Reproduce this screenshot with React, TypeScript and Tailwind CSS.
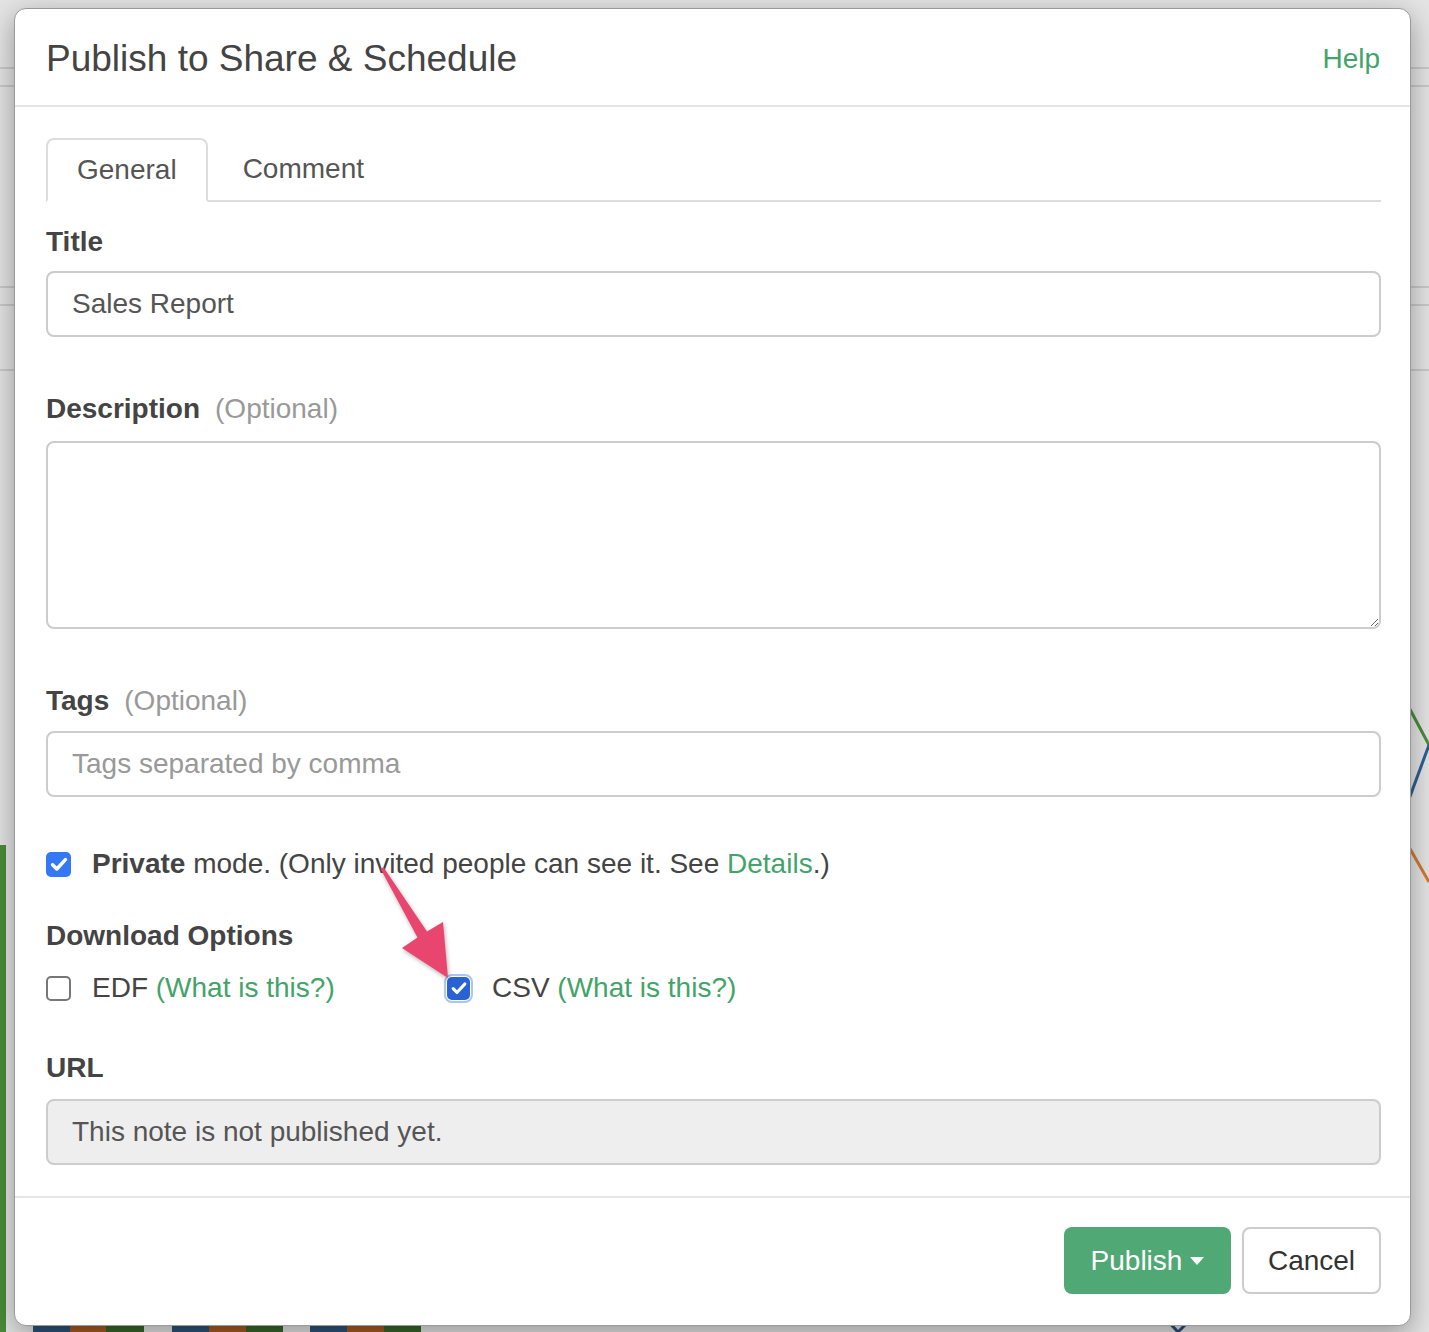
import React from "react";

const GREEN = "text-[#43a46a]";

const Check = ({ size = 22 }: { size?: number }) => (
  <svg viewBox="0 0 24 24" width={size} height={size} fill="none">
    <path
      d="M5 12.8l4.6 4.6L19 7.2"
      stroke="white"
      strokeWidth="3.8"
      strokeLinecap="round"
      strokeLinejoin="round"
    />
  </svg>
);

const Label = ({ text, optional }: { text: string; optional?: boolean }) => (
  <div className="flex h-[40px] items-center text-[28px] leading-[40px]">
    <span className="font-bold text-[#444]">{text}</span>
    {optional && <span className="ml-[15px] text-[#999]">(Optional)</span>}
  </div>
);

export default function App() {
  return (
    <div className="relative h-[1332px] w-[1429px] overflow-hidden bg-[#e4e4e4] pl-[14px] pt-[8px] font-['Liberation_Sans','Helvetica',Arial,sans-serif]">
      {/* page behind the dialog */}
      <div className="absolute left-0 top-[67px] h-[2px] w-full bg-[#c9c9c9]" />
      <div className="absolute left-0 top-[85px] h-[2px] w-full bg-[#c9c9c9]" />
      <div className="absolute left-0 top-[286px] h-[2px] w-full bg-[#c9c9c9]" />
      <div className="absolute left-0 top-[304px] h-[2px] w-full bg-[#c9c9c9]" />
      <div className="absolute left-0 top-[369px] h-[2px] w-full bg-[#c9c9c9]" />
      <div className="absolute left-0 top-[845px] h-[487px] w-[6px] bg-[#4a8c3a]" />
      <div className="absolute bottom-0 left-[33px] flex h-[8px]">
        <div className="w-[37px] bg-[#2e5279]" />
        <div className="w-[36px] bg-[#a45a22]" />
        <div className="w-[38px] bg-[#37652a]" />
        <div className="w-[28px]" />
        <div className="w-[37px] bg-[#2e5279]" />
        <div className="w-[37px] bg-[#a45a22]" />
        <div className="w-[37px] bg-[#37652a]" />
        <div className="w-[27px]" />
        <div className="w-[37px] bg-[#2e5279]" />
        <div className="w-[37px] bg-[#a45a22]" />
        <div className="w-[37px] bg-[#37652a]" />
      </div>
      <svg
        className="pointer-events-none absolute left-0 top-0"
        width="1429"
        height="1332"
        fill="none"
      >
        <path d="M1405 700 L1429 745" stroke="#4a8c3a" strokeWidth="3" />
        <path d="M1429 745 L1405 810" stroke="#2e5f93" strokeWidth="3" />
        <path d="M1405 840 L1429 882" stroke="#d27a2c" strokeWidth="3" />
        <path d="M1165 1318 L1178 1332 L1192 1318" stroke="#2e4f7a" strokeWidth="3" />
      </svg>

      {/* dialog */}
      <div className="relative z-10 flex w-[1397px] flex-col rounded-[12px] border border-[#9a9a9a] bg-white shadow-[0_8px_28px_rgba(0,0,0,0.35)]">
        <div className="flex h-[98px] items-center justify-between border-b-2 border-[#e5e5e5] pl-[31px] pr-[30px] pt-[3px]">
          <h2 className="text-[37px] text-[#444]">Publish to Share &amp; Schedule</h2>
          <a className={`text-[28px] ${GREEN}`}>Help</a>
        </div>

        <div className="flex flex-col pb-[31px] pl-[31px] pr-[29px] pt-[31px] text-[28px] text-[#444]">
          <div className="flex border-b-2 border-[#ddd]">
            <div className="-mb-[2px] flex h-[64px] items-center rounded-t-[8px] border-2 border-[#ddd] border-b-white bg-white px-[29px] text-[#555]">
              General
            </div>
            <div className="ml-[4px] flex h-[62px] items-center px-[31px] text-[#555]">
              Comment
            </div>
          </div>

          <div className="mt-[20px]">
            <Label text="Title" />
          </div>
          <div className="mt-[9px] flex h-[66px] items-center rounded-[8px] border-2 border-[#ccc] px-[24px] text-[#555]">
            Sales Report
          </div>

          <div className="mt-[52px]">
            <Label text="Description" optional />
          </div>
          <textarea className="mt-[12px] h-[188px] w-full rounded-[8px] border-2 border-[#ccc] px-[24px] py-[12px] text-[28px] text-[#555] outline-none" />

          <div className="mt-[52px]">
            <Label text="Tags" optional />
          </div>
          <div className="mt-[10px] flex h-[66px] items-center rounded-[8px] border-2 border-[#ccc] px-[24px] text-[#999]">
            Tags separated by comma
          </div>

          <div className="mt-[47px] flex h-[40px] items-center">
            <div className="flex h-[25px] w-[25px] items-center justify-center rounded-[5px] bg-[#3478f6]">
              <Check />
            </div>
            <span className="ml-[21px]">
              <b>Private</b> mode. (Only invited people can see it. See{" "}
              <span className={GREEN}>Details</span>.)
            </span>
          </div>

          <div className="mt-[32px]">
            <Label text="Download Options" />
          </div>
          <div className="mt-[12px] flex h-[40px] items-center">
            <div className="flex w-[401px] items-center">
              <div className="h-[25px] w-[25px] rounded-[5px] border-2 border-[#777] bg-white" />
              <span className="ml-[21px]">
                EDF <span className={GREEN}>(What is this?)</span>
              </span>
            </div>
            <div className="flex items-center">
              <div className="flex h-[23px] w-[23px] items-center justify-center rounded-[5px] bg-[#2a62d4] outline-2 outline-offset-1 outline-[#a8c6f6]">
                <Check size={20} />
              </div>
              <span className="ml-[22px]">
                CSV <span className={GREEN}>(What is this?)</span>
              </span>
            </div>
          </div>

          <div className="mt-[40px]">
            <Label text="URL" />
          </div>
          <div className="mt-[11px] flex h-[66px] items-center rounded-[8px] border-2 border-[#ccc] bg-[#eee] px-[24px] text-[#555]">
            This note is not published yet.
          </div>
        </div>

        <div className="flex justify-end gap-[11px] border-t-2 border-[#e5e5e5] pb-[31px] pr-[29px] pt-[29px]">
          <button className="flex h-[67px] w-[167px] items-center justify-center gap-[8px] rounded-[8px] bg-[#50a874] text-[28px] text-white">
            Publish
            <span className="h-0 w-0 border-x-[7px] border-t-[8px] border-x-transparent border-t-white" />
          </button>
          <button className="flex h-[67px] w-[139px] items-center justify-center rounded-[8px] border-2 border-[#ccc] bg-white text-[28px] text-[#333]">
            Cancel
          </button>
        </div>
      </div>

      {/* annotation arrow */}
      <svg
        className="pointer-events-none absolute left-0 top-0 z-20 drop-shadow-[1px_2px_2px_rgba(0,0,0,0.3)]"
        width="1429"
        height="1332"
      >
        <polygon
          points="380.5,868.8 417.5,937.5 402,948 448,978 443,922 427,931.5 383.5,867.2"
          fill="#e9466f"
        />
      </svg>
    </div>
  );
}
